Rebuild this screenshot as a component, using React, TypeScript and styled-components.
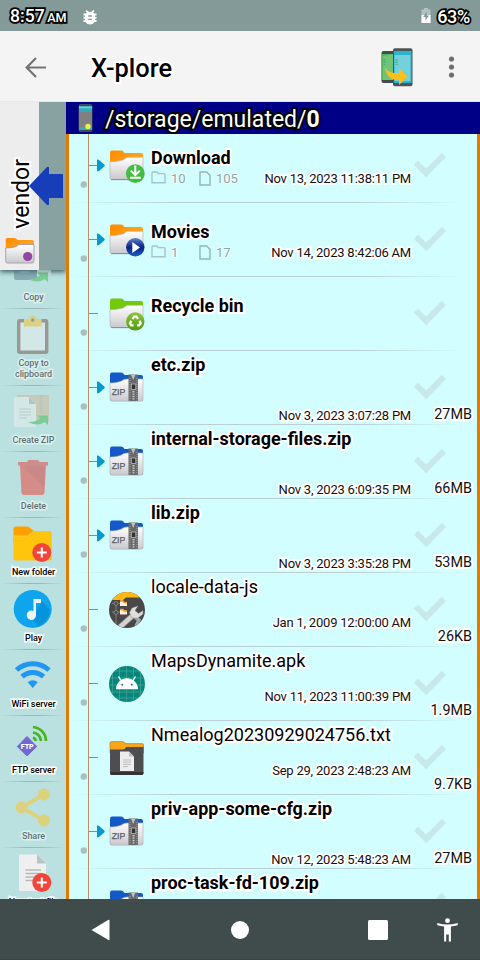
import React from 'react';
import styled, { createGlobalStyle, css } from 'styled-components';

const GlobalStyle = createGlobalStyle`
  * { box-sizing: border-box; }
  body { margin: 0; font-family: Roboto, sans-serif; background: #bae0e0; }
  svg { display: block; flex: none; }
`;

const glow = (color: string, width: number) => css`
  -webkit-text-stroke: ${width}px ${color};
  paint-order: stroke fill;
`;

const Screen = styled.div`
  width: 480px;
  height: 960px;
  display: flex;
  flex-direction: column;
  overflow: hidden;
`;

const StatusBar = styled.header`
  height: 31px;
  flex: none;
  display: flex;
  align-items: center;
  padding: 3px 10px 0;
  background: #839a98;
  color: #fff;
`;

const Clock = styled.span`
  font-size: 17.6px;
  font-weight: 500;
  line-height: 22px;
  width: 73px;
  white-space: nowrap;
  ${glow('#000', 3.6)}
  small { font-size: 12.6px; margin-left: 2.5px; }
`;

const Battery = styled.span`
  margin-left: auto;
  display: flex;
  align-items: center;
  gap: 6px;
  font-size: 18px;
  font-weight: 500;
  letter-spacing: -0.3px;
  line-height: 22px;
  svg { margin-bottom: 4px; }
  b { font-weight: 500; ${glow('#000', 3.6)} }
`;

const AppBar = styled.div`
  height: 71px;
  flex: none;
  display: flex;
  align-items: center;
  padding: 2px 0 0 25px;
  background: #f4f4f4;
  border-bottom: 1px solid #e4e8e8;
`;

const AppTitle = styled.h1`
  margin: 0 auto 0 45px;
  padding-top: 2px;
  font-size: 25.4px;
  font-weight: 500;
  line-height: 30px;
  ${glow('#fff', 4)}
`;

const Body = styled.div`
  height: 797px;
  flex: none;
  display: flex;
`;

const Sidebar = styled.aside`
  width: 66px;
  flex: none;
  display: flex;
  flex-direction: column;
  background: #bae0e0;
`;

const OtherPane = styled.div`
  height: 168px;
  flex: none;
  display: flex;
  background: #88a2a1;
  box-shadow: 0 2px 5px rgba(20, 50, 50, 0.75);
  position: relative;
  clip-path: inset(0 0 -10px 0);
`;

const PaneTab = styled.div`
  width: 39px;
  height: 168px;
  display: flex;
  flex-direction: column;
  align-items: center;
  justify-content: flex-end;
  padding-bottom: 6px;
  background: #ededed;
`;

const PaneName = styled.span`
  writing-mode: vertical-rl;
  transform: rotate(180deg);
  font-size: 23px;
  line-height: 26px;
  margin: 0 0 8px 4px;
  ${glow('#fff', 4)}
`;

const SwitchArrow = styled.div`
  position: absolute;
  left: 29px;
  top: 65px;
`;

const Tools = styled.div`
  flex: 1;
  min-height: 0;
  overflow: hidden;
`;

const Tool = styled.button<{ $tall?: boolean; $disabled?: boolean; $scrolled?: boolean }>`
  display: flex;
  flex-direction: column;
  align-items: center;
  width: 66px;
  height: ${p => (p.$tall ? 77 : 66)}px;
  margin-top: ${p => (p.$scrolled ? -27 : 0)}px;
  padding: 5px 1px 0 0;
  border: 0;
  background: linear-gradient(90deg, transparent 2%, #9bb8b8 40%, #9bb8b8 60%, transparent 98%) bottom / 100% 1px no-repeat;
  > * { opacity: ${p => (p.$disabled ? 0.5 : 1)}; }
`;

const ToolLabel = styled.span`
  margin-top: 2px;
  font: 500 9px/11px Roboto, sans-serif;
  letter-spacing: -0.06px;
  white-space: pre;
  text-align: center;
  color: #000;
  padding-left: 2px;
  ${glow('#fff', 3)}
`;

const Pane = styled.main`
  flex: 1;
  display: flex;
  flex-direction: column;
  min-width: 0;
`;

const PathBar = styled.div`
  height: 32px;
  flex: none;
  display: flex;
  align-items: center;
  padding-left: 12px;
  gap: 12px;
  background: #000086;
  color: #fff;
`;

const PathText = styled.span`
  font-size: 23px;
  line-height: 26px;
  padding-top: 3px;
  white-space: nowrap;
  ${glow('#000', 4)}
  b { font-weight: 700; }
`;

const FileList = styled.div`
  flex: 1;
  min-height: 0;
  overflow: hidden;
  border: solid #e17b00;
  border-width: 0 3px;
  background: #d2feff;
`;

const FileRow = styled.div<{ $first?: boolean }>`
  height: 74px;
  margin-top: ${p => (p.$first ? -5 : 0)}px;
  display: flex;
  background: linear-gradient(90deg, transparent 0, #b9cfd3 25%, #b9cfd3 70%, transparent 97%) bottom / 100% 1px no-repeat;
`;

const IconCell = styled.div`
  width: 42px;
  flex: none;
  padding-top: 19px;
`;

const Details = styled.div<{ $kind: Kind }>`
  width: 260px;
  flex: none;
  padding-top: ${p => (p.$kind === 'folder' ? 18 : 3)}px;
`;

const FileName = styled.div<{ $bold: boolean }>`
  font-size: ${p => (p.$bold ? 17.95 : 18)}px;
  line-height: 22px;
  font-weight: ${p => (p.$bold ? 700 : 400)};
  white-space: nowrap;
  ${glow('#fff', 4)}
`;

const metaGap = { folder: 1, zip: 31, file: 16 };

const Meta = styled.div<{ $kind: Kind }>`
  margin-top: ${p => metaGap[p.$kind]}px;
  height: 16px;
  display: flex;
  align-items: center;
  font-size: 13px;
  line-height: 16px;
`;

const Count = styled.span`
  width: 48px;
  display: flex;
  align-items: center;
  gap: 5px;
  color: #93a3a4;
  span { padding-top: 1px; ${glow('#effeff', 2)} }
`;

const DateText = styled.span`
  margin-left: auto;
  padding-top: 1px;
  color: #111;
  font-size: 13px;
  letter-spacing: -0.22px;
  white-space: nowrap;
  ${glow('#fff', 3.4)}
`;

const Status = styled.div`
  width: 61px;
  flex: none;
  display: flex;
  flex-direction: column;
  padding: 23px 0 0 2px;
`;

const Size = styled.span`
  margin-top: 6px;
  align-self: flex-end;
  font-size: 14.4px;
  line-height: 18px;
  color: #111;
  ${glow('#fff', 3.6)}
`;

const NavBar = styled.nav`
  height: 61px;
  flex: none;
  display: flex;
  align-items: center;
  padding: 2px 0 0 91px;
  background: #3f4c4b;
  border-bottom: 1px solid #384341;
`;

const NavButton = styled.span<{ $gap: number }>`
  margin-left: ${p => p.$gap}px;
`;

type Kind = 'folder' | 'zip' | 'file';
type IconName = 'download' | 'movies' | 'recycle' | 'zip' | 'tools' | 'android' | 'text';

interface Entry {
  name: string;
  kind: Kind;
  icon: IconName;
  date?: string;
  size?: string;
  folders?: number;
  files?: number;
  expandable?: boolean;
}

const entries: Entry[] = [
  { name: 'Download', kind: 'folder', icon: 'download', date: 'Nov 13, 2023 11:38:11 PM', folders: 10, files: 105, expandable: true },
  { name: 'Movies', kind: 'folder', icon: 'movies', date: 'Nov 14, 2023 8:42:06 AM', folders: 1, files: 17, expandable: true },
  { name: 'Recycle bin', kind: 'folder', icon: 'recycle' },
  { name: 'etc.zip', kind: 'zip', icon: 'zip', date: 'Nov 3, 2023 3:07:28 PM', size: '27MB', expandable: true },
  { name: 'internal-storage-files.zip', kind: 'zip', icon: 'zip', date: 'Nov 3, 2023 6:09:35 PM', size: '66MB', expandable: true },
  { name: 'lib.zip', kind: 'zip', icon: 'zip', date: 'Nov 3, 2023 3:35:28 PM', size: '53MB', expandable: true },
  { name: 'locale-data-js', kind: 'file', icon: 'tools', date: 'Jan 1, 2009 12:00:00 AM', size: '26KB' },
  { name: 'MapsDynamite.apk', kind: 'file', icon: 'android', date: 'Nov 11, 2023 11:00:39 PM', size: '1.9MB' },
  { name: 'Nmealog20230929024756.txt', kind: 'file', icon: 'text', date: 'Sep 29, 2023 2:48:23 AM', size: '9.7KB' },
  { name: 'priv-app-some-cfg.zip', kind: 'zip', icon: 'zip', date: 'Nov 12, 2023 5:48:23 AM', size: '27MB', expandable: true },
  { name: 'proc-task-fd-109.zip', kind: 'zip', icon: 'zip', expandable: true },
];

const HiddenSvg = styled.svg`
  position: absolute;
`;

const Gradients = () => (
  <HiddenSvg width="0" height="0" aria-hidden>
    <defs>
      <linearGradient id="paper" x2="0" y2="1"><stop stopColor="#fff" /><stop offset="1" stopColor="#c9c9cd" /></linearGradient>
      <linearGradient id="orange" x2="1" y2="1"><stop stopColor="#ff8a00" /><stop offset="1" stopColor="#ffb62c" /></linearGradient>
      <linearGradient id="blueBall" x2="0" y2="1"><stop stopColor="#5f83cc" /><stop offset=".5" stopColor="#0a2584" /><stop offset="1" stopColor="#1d5cc4" /></linearGradient>
      <linearGradient id="greenBall" x2="0" y2="1"><stop stopColor="#8cc63a" /><stop offset="1" stopColor="#4f9a10" /></linearGradient>
    </defs>
  </HiddenSvg>
);

const FolderShape = ({ tab }: { tab: string }) => (
  <g>
    <path d="M1 5Q1 2.6 3 2.6H12Q14 2.6 15.5 5H32Q34 5 34 7V29Q34 31 32 31H3Q1 31 1 29Z" fill={tab} />
    <path d="M1 13.8Q6 13.8 12 12.5Q15 12 16.5 10.3L18 9.3H34V29Q34 31.6 32 31.6H3Q1 31.6 1 29Z" fill="url(#paper)" stroke="#a9b3b6" strokeWidth=".6" />
    <path d="M2 31.6H33" stroke="#858d90" strokeWidth="1" />
  </g>
);

const FileIcon = ({ name }: { name: IconName }) => {
  switch (name) {
    case 'download':
      return (
        <svg width="36" height="36">
          <FolderShape tab="url(#orange)" />
          <circle cx="26.3" cy="25.6" r="9.4" fill="#45bd42" />
          <path d="M26.3 17.5V26M21.8 22.6L26.3 27L30.8 22.6M21 29.8H31.8" fill="none" stroke="#fff" strokeWidth="2" />
        </svg>
      );
    case 'movies':
      return (
        <svg width="36" height="36">
          <FolderShape tab="url(#orange)" />
          <circle cx="26.3" cy="25.3" r="9.2" fill="url(#blueBall)" />
          <path d="M23.3 20L31 25.5L23.3 31Z" fill="#fff" />
        </svg>
      );
    case 'recycle':
      return (
        <svg width="36" height="36">
          <FolderShape tab="#73c90c" />
          <circle cx="26.3" cy="25.4" r="9.2" fill="url(#greenBall)" />
          <path d="M23.6 23L25 20.6H27.6L29 23M30.6 24.8L31.6 27.3L30.2 29.4H28M24.6 29.4H22.2L21 27.2L22.3 24.8" fill="none" stroke="#fff" strokeWidth="2.3" />
        </svg>
      );
    case 'zip':
      return (
        <svg width="36" height="36">
          <path d="M1 5Q1 2.6 3 2.6H12Q14 2.6 15.5 5H32Q34 5 34 7V29Q34 31 32 31H3Q1 31 1 29Z" fill="#1558c8" />
          <path d="M1 13Q8 13 12 11.2Q15 9 18 9H34V29Q34 31.2 32 31.2H3Q1 31.2 1 29Z" fill="url(#paper)" stroke="#a9b3b6" strokeWidth=".6" />
          <path d="M19.5 4.5H29V31H19.5Z" fill="#686868" />
          <path d="M22 4.5L24.2 10L26.5 4.5Z" fill="#b6c4cd" />
          <path d="M21 8V30.5M28 8V30.5" stroke="#8f8f8f" strokeWidth="1.5" strokeDasharray="1 1" />
          <path d="M24.5 21V30" stroke="#c8c8c8" strokeWidth="2" strokeDasharray="1.4 1" />
          <rect x="22.3" y="14" width="4.5" height="5.5" fill="#333" stroke="#bdbdbd" strokeWidth=".8" />
          <text x="2.8" y="24.8" fontSize="8.6" fontFamily="Liberation Sans" fill="#5c5c5c" stroke="#5c5c5c" strokeWidth=".25" textLength="13.5" lengthAdjust="spacingAndGlyphs">ZIP</text>
        </svg>
      );
    case 'tools':
      return (
        <svg width="36" height="36" viewBox="0 0 36 36" overflow="visible">
          <clipPath id="round"><circle cx="18" cy="18" r="18" /></clipPath>
          <g clipPath="url(#round)">
            <rect width="36" height="36" fill="#484848" />
            <path d="M0 0H36V5.5H17L14 8H0Z" fill="#fdb813" />
            <path d="M3 11.5H12M3 20H12M7 10V32" stroke="#8c8c8c" strokeWidth=".8" />
            <circle cx="7" cy="11.5" r="2" fill="#484848" stroke="#999" strokeWidth=".7" />
            <circle cx="7" cy="20.5" r="2" fill="#484848" stroke="#999" strokeWidth=".7" />
            <path d="M11 8.5H14L15 10H18V14H11ZM11 17H14L15 18.5H18V22.5H11Z" fill="#fff0dc" />
            <path d="M11 9H14L15 10.5H18M11 17.5H14L15 19H18" fill="none" stroke="#f79b1c" strokeWidth="1.3" />
            <path d="M24 24L30 28L27 34" fill="none" stroke="#a8a8a8" strokeWidth="3.4" />
            <path d="M11 35L25.5 22" stroke="#777" strokeWidth="6" />
            <path d="M11 35L25.5 22" stroke="#d4d4d4" strokeWidth="4.4" />
            <path d="M29 14L23 16L20.5 20.5L23 26L29 26L34 22L34 18.5L29.5 21.5L26 18.5Z" fill="#e0e0e0" stroke="#888" strokeWidth=".5" />
          </g>
        </svg>
      );
    case 'android':
      return (
        <svg width="36" height="36">
          <clipPath id="disc"><circle cx="18" cy="18" r="18" /></clipPath>
          <g clipPath="url(#disc)">
            <rect width="36" height="36" fill="#07877a" />
            <path d="M3.5 0V36M10.5 0V36M17.5 0V36M24.5 0V36M31.5 0V36M0 5H36M0 12H36M0 19H36M0 26H36M0 32H36" stroke="#42a297" strokeWidth=".8" />
          </g>
          <path d="M7 23.3A11 11 0 0 1 29 23.3Z" fill="#fff" />
          <path d="M12 14.5L9.5 10.5M24 14.5L26.5 10.5" stroke="#fff" strokeWidth="1.4" />
          <circle cx="13.2" cy="18.7" r="1" fill="#07877a" /><circle cx="22.8" cy="18.7" r="1" fill="#07877a" />
        </svg>
      );
    default:
      return (
        <svg width="36" height="36">
          <path d="M1 3Q1 1.5 3 1.5H14L17 3.6H33Q34.5 3.6 34.5 5V13H1Z" fill="#f9a51b" stroke="#a5782b" strokeWidth=".6" />
          <path d="M1 9.5H14Q16 9.5 17 7H34.5V33Q34.5 35 32.5 35H3Q1 35 1 33Z" fill="#4e4e50" />
          <path d="M1 32H34.5V33Q34.5 35 32.5 35H3Q1 35 1 33Z" fill="#333" />
          <path d="M11 11.5H20L25 16.5V31H11Z" fill="#ededed" />
          <path d="M20 11.5V16.5H25Z" fill="#bdbdbd" />
          <path d="M14 20H22M14 22.2H22M14 24.4H22M14 26.6H19" stroke="#bbb" strokeWidth="1" />
        </svg>
      );
  }
};

const TreeLines = ({ expandable }: { expandable?: boolean }) => (
  <svg width="40" height="74">
    <path d="M19.5 0V74" stroke="#bd8f6b" />
    <path d="M20 36.5H29" stroke="#a8865f" />
    {expandable && <path d="M28 30.6Q30 30.3 31.5 32.3L35.5 35.8Q36 36.5 35.5 37.3L31.5 40.7Q30 42.5 28 42.3Z" fill="#0499cf" />}
    <circle cx="14.8" cy="55.5" r="3.2" fill="#a9bfc0" />
  </svg>
);

const Check = () => (
  <svg width="33" height="26"><path d="M0.8 12.8L5 8.7L13.2 16.6L28.7 0.7L33 5L13.2 25.3Z" fill="#c7e9ea" /></svg>
);

const Row = ({ entry, first }: { entry: Entry; first: boolean }) => (
  <FileRow $first={first}>
    <TreeLines expandable={entry.expandable} />
    <IconCell><FileIcon name={entry.icon} /></IconCell>
    <Details $kind={entry.kind}>
      <FileName $bold={entry.kind !== 'file'}>{entry.name}</FileName>
      <Meta $kind={entry.kind}>
        {entry.folders !== undefined && (
          <>
            <Count>
              <svg width="15" height="14"><path d="M1 11.8V2Q1 1 2 1H6L7.2 2.6H13Q14 2.6 14 3.6V11.8Z" fill="none" stroke="#a6c3c5" strokeWidth="1.4" /></svg>
              <span>{entry.folders}</span>
            </Count>
            <Count>
              <svg width="12" height="15"><path d="M1 1H7.8L11 4.5V14H1Z" fill="none" stroke="#93b5b8" strokeWidth="1.4" /></svg>
              <span>{entry.files}</span>
            </Count>
          </>
        )}
        {entry.date && <DateText>{entry.date}</DateText>}
      </Meta>
    </Details>
    <Status>
      <Check />
      {entry.size && <Size>{entry.size}</Size>}
    </Status>
  </FileRow>
);

const PlusBadge = () => (
  <g>
    <circle cx="28.8" cy="29.5" r="9.5" fill="#f2453a" />
    <path d="M28.8 24.5V34.5M23.8 29.5H33.8" stroke="#fff" strokeWidth="2" />
  </g>
);

const GreenArrow = () => <path d="M15 31Q23 31 27 27.5L24 24.5H35V34L31.5 31Q25 36 15 31Z" fill="#41b84a" />;

/* Tool drawings share a 40 by 42 canvas. */
const tools: { label: string; tall?: boolean; disabled?: boolean; icon: React.ReactNode }[] = [
  {
    label: 'Copy', disabled: true,
    icon: <><path d="M22 9H38V27H22Z" fill="#dce4e4" /><path d="M1 5H24V30Q24 32 22 32H3Q1 32 1 30Z" fill="#56778a" /><path d="M7 20H16M7 24H16" stroke="#92a8b5" /><GreenArrow /></>,
  },
  {
    label: 'Copy to\nclipboard', tall: true, disabled: true,
    icon: <><rect x="5.7" y="6.8" width="28" height="31.5" rx="1" fill="#eee" stroke="#795548" strokeWidth="3.4" /><path d="M11 5H16Q16.5 1.5 19.7 1.5Q23 1.5 23.5 5H28.5V12.5H11Z" fill="#ffc226" /><circle cx="19.7" cy="6" r="1.7" fill="#795548" /></>,
  },
  {
    label: 'Create ZIP', disabled: true,
    icon: <><path d="M4 4H36V31H4Z" fill="#d3b68e" /><path d="M28 4V22" stroke="#aaa" strokeWidth="3" strokeDasharray="1.5 1" /><path d="M1 6H16L23 13V36H1Z" fill="#eee" /><path d="M16 6V13H23Z" fill="#aaa" /><path d="M6 18H18M6 21H18M6 24H18M6 27H14" stroke="#b0b8ba" /><GreenArrow /></>,
  },
  {
    label: 'Delete', disabled: true,
    icon: <><path d="M7 8H33L31.5 36Q31 38 29 38H11Q9 38 8.5 36Z" fill="#f03a35" /><path d="M5 5H14L15.5 3H25L26.5 5H35V8.5H5Z" fill="#e33b36" /><path d="M10 9L31 30L32 9Z" fill="#c03030" opacity=".5" /></>,
  },
  {
    label: 'New folder',
    icon: <><path d="M.5 5Q.5 3.5 2.5 3.5H15L21 8V20H.5Z" fill="#ffa000" /><path d="M.5 13H15L21 8H37Q38.7 8 38.7 10V35.5Q38.7 37.5 36.5 37.5H2.5Q.5 37.5 .5 35.5Z" fill="#ffc40c" /><path d="M.5 13H15L21 8" fill="none" stroke="#ffcf40" /><PlusBadge /></>,
  },
  {
    label: 'Play',
    icon: <><circle cx="19.7" cy="20" r="19" fill="#0fa5ee" /><path d="M20 29L29 12L37 21Q36 33 24 38Z" fill="#0594db" /><path d="M20.5 10H28V14H23V27A4.7 4.7 0 1 1 20.5 22Z" fill="#eef3f5" /></>,
  },
  {
    label: 'WiFi server',
    icon: <><path d="M3.5 15A24 24 0 0 1 36 15" fill="none" stroke="#2196f3" strokeWidth="5" /><path d="M9 21.7A16 16 0 0 1 30.5 21.7" fill="none" stroke="#2196f3" strokeWidth="5" /><path d="M14.7 27.3Q19.7 23.2 24.7 27.3L19.7 33Z" fill="#2196f3" /></>,
  },
  {
    label: 'FTP server',
    icon: <><path d="M14 15.5L23.7 25.5L14 35L4.3 25.5Z" fill="#726ad0" stroke="#726ad0" strokeWidth="1" strokeLinejoin="round" /><text x="14.2" y="28.3" fill="#fff" fontSize="7" fontWeight="900" textAnchor="middle" fontFamily="Roboto">FTP</text><path d="M20 6A14 14 0 0 1 33 20M20 11.5A9 9 0 0 1 28 20M20 16.5A5 5 0 0 1 23 20" fill="none" stroke="#43b71b" strokeWidth="2.7" /></>,
  },
  {
    label: 'Share', disabled: true,
    icon: <><path d="M31 7.5L8.5 20.5L31 33.5" fill="none" stroke="#ffc51c" strokeWidth="4" /><circle cx="31" cy="7.5" r="6" fill="#ffc51c" /><circle cx="8.5" cy="20.5" r="6" fill="#ffc51c" /><circle cx="31" cy="33.5" r="6" fill="#ffc51c" /></>,
  },
  {
    label: 'New text file',
    icon: <><path d="M6 3Q6 1.5 7.5 1.5H24L33 10.5V38H7.5Q6 38 6 36.5Z" fill="#efefef" /><path d="M24 1.5V10.5H33Z" fill="#b9c3c4" /><path d="M12.5 17H28M12.5 20.5H28M12.5 24H28M12.5 27.5H22" stroke="#b8b8b8" strokeWidth="1.5" /><PlusBadge /></>,
  },
];

export default function App() {
  return (
    <Screen>
      <GlobalStyle />
      <Gradients />
      <StatusBar>
        <Clock>8:57<small>AM</small></Clock>
        <svg width="14" height="15" viewBox="0 0 14 15">
          <path d="M2.5 3.5L4 2.5L2.5 1L3.5 0L5.5 1.7H8.5L10.5 0L11.5 1L10 2.5L11 3.5H13.5V5.5H12V6.7H13.5V8.7H12V10H13.5V12H11.5Q10 14.5 7 14.5T2.5 12H.5V10H2V8.7H.5V6.7H2V5.5H.5V3.5Z" fill="#fff" />
          <path d="M5.2 6H8.8M5.2 9.3H8.8" stroke="#839a98" strokeWidth="1.3" />
        </svg>
        <Battery>
          <svg width="10" height="15"><path d="M3 0H7V1.5H9.5V15H.5V1.5H3Z" fill="#b3c2c1" /><path d="M.5 7H9.5V15H.5Z" fill="#fff" /><path d="M5.8 3.5L2.2 9H4.5V12.5L8 7.5H5.8Z" fill="#839a98" /></svg>
          <b>63%</b>
        </Battery>
      </StatusBar>
      <AppBar>
        <svg width="21" height="21"><path d="M21 10.5H2M11 1L1.7 10.5L11 20" fill="none" stroke="#747474" strokeWidth="2.2" /></svg>
        <AppTitle>X-plore</AppTitle>
        <svg width="32" height="39">
          <rect x=".5" y="3" width="19" height="32" rx="2" fill="#454b4d" />
          <rect x="1" y="6" width="17" height="26" fill="#52b45b" />
          <path d="M2 8L14 6V32H2Z" fill="#71c476" />
          <rect x="12" y=".3" width="19.5" height="38" rx="2" fill="#4c5458" />
          <rect x="13" y="3" width="17.5" height="32" fill="#2bb5cf" />
          <path d="M13.5 7H29.5V33H13.5Z" fill="#74d1dc" />
          <path d="M3.5 11V17M15.5 11V17" stroke="#4ba987" strokeWidth="2" strokeDasharray="1.5 1" />
          <path d="M4 19Q7 26 18 25V20L26.5 29L18 37V32Q6 33 4 19Z" fill="#ffbf17" />
        </svg>
        <svg width="67" height="24"><g fill="#707070"><circle cx="38.5" cy="4" r="2.6" /><circle cx="38.5" cy="12" r="2.6" /><circle cx="38.5" cy="20" r="2.6" /></g></svg>
      </AppBar>
      <Body>
        <Sidebar>
          <OtherPane>
            <PaneTab>
              <PaneName>vendor</PaneName>
              <svg width="30" height="27"><path d="M.7 3Q.7 1 2.5 1H10L13 3H27Q29 3 29 5V15H.7Z" fill="url(#orange)" /><path d="M.7 11Q7 11 11 9.5L14 7.5H29V23.5Q29 26 27 26H2.5Q.7 26 .7 24Z" fill="url(#paper)" stroke="#9b93a8" strokeWidth=".8" /><circle cx="22.7" cy="19.5" r="4.6" fill="#9344a3" /></svg>
            </PaneTab>
            <SwitchArrow><svg width="34" height="38"><path d="M0 19L18 0H20V7H34V31H20V38H18Z" fill="#183db8" /></svg></SwitchArrow>
          </OtherPane>
          <Tools>
            {tools.map((t, i) => (
              <Tool key={t.label} $tall={t.tall} $disabled={t.disabled} $scrolled={i === 0}>
                <svg width="40" height="42">{t.icon}</svg>
                <ToolLabel>{t.label}</ToolLabel>
              </Tool>
            ))}
          </Tools>
        </Sidebar>
        <Pane>
          <PathBar>
            <svg width="15" height="28"><rect x=".5" y="0" width="14" height="28" rx="2" fill="#3b4b59" /><rect x="1" y="2" width="13" height="24" fill="#35a8bd" /><rect x="1" y="8" width="13" height="15" fill="#808080" /><path d="M1 3.5H14" stroke="#6ed0dc" strokeWidth="1.5" /><circle cx="10" cy="22.5" r="2.7" fill="#e8f34c" /></svg>
            <PathText>/storage/emulated/<b>0</b></PathText>
          </PathBar>
          <FileList>
            {entries.map((entry, i) => <Row key={entry.name} entry={entry} first={i === 0} />)}
          </FileList>
        </Pane>
      </Body>
      <NavBar>
        <NavButton $gap={0}><svg width="19" height="22"><path d="M.5 11L17.5 .8Q18.5 .5 18.5 1.5V20.5Q18.5 21.5 17.5 21Z" fill="#fff" /></svg></NavButton>
        <NavButton $gap={121}><svg width="18" height="18"><circle cx="9" cy="9" r="9" fill="#fff" /></svg></NavButton>
        <NavButton $gap={119}><svg width="20" height="20"><rect width="20" height="20" rx="1.5" fill="#fff" /></svg></NavButton>
        <NavButton $gap={49}><svg width="21" height="24"><circle cx="10.5" cy="2.7" r="2.4" fill="#fff" /><path d="M.3 5Q10.5 8 20.7 5V7.3Q17 8.3 13.9 8.5V23.5H11.8V16.5H9.2V23.5H7.1V8.5Q4 8.3 .3 7.3Z" fill="#fff" /></svg></NavButton>
      </NavBar>
    </Screen>
  );
}
